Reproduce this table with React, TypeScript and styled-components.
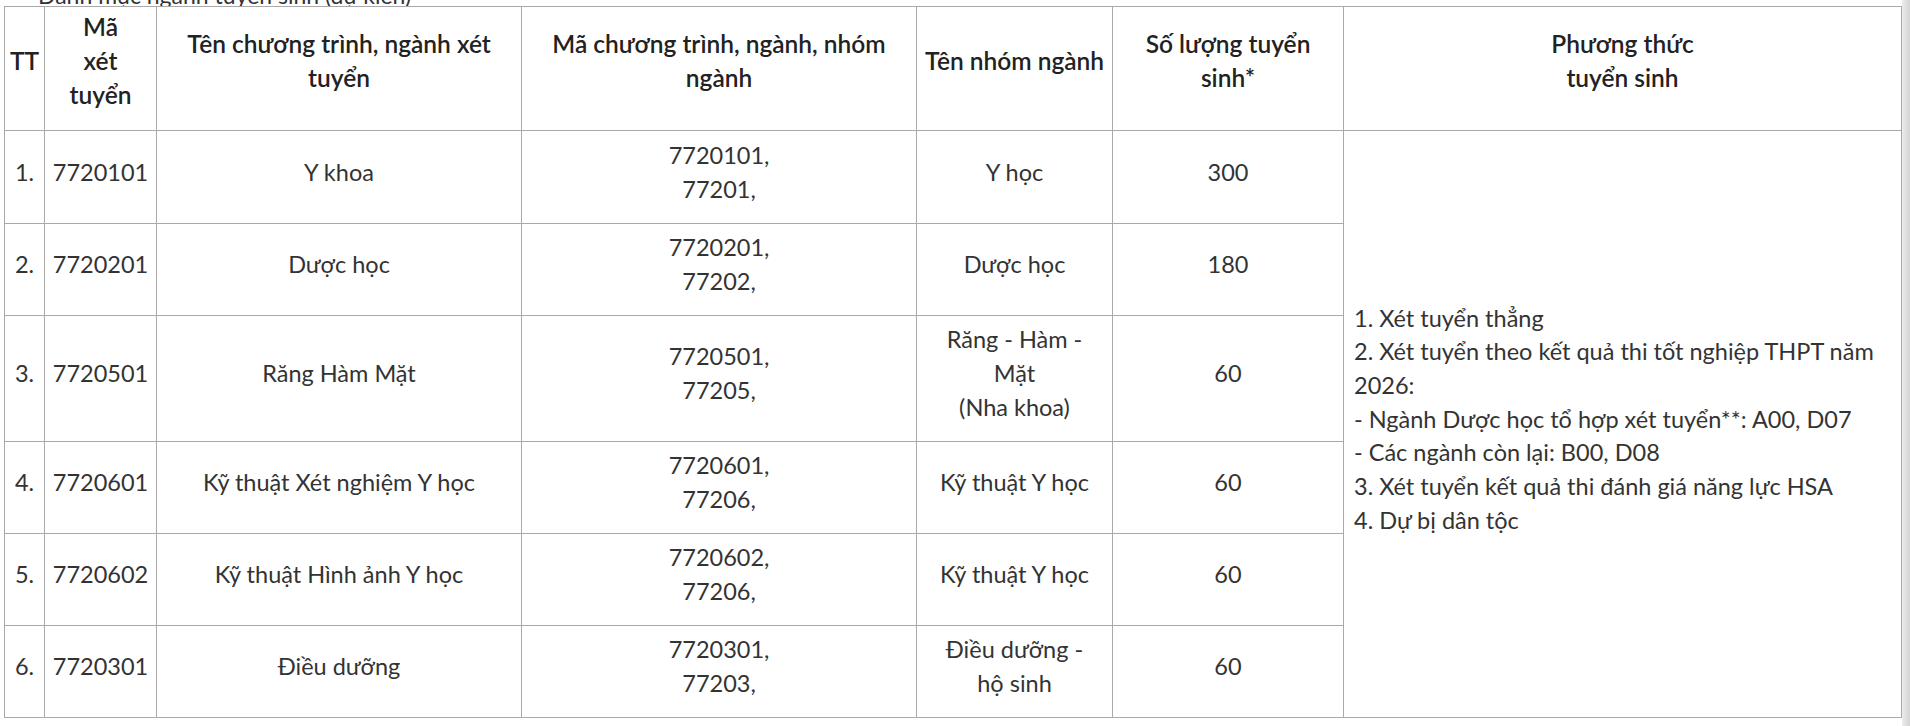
import React from 'react';
import styled, { createGlobalStyle } from 'styled-components';

interface Program {
  tt: string;
  code: string;
  name: string;
  groupCodes: string[];
  groupName: string[];
  quota: string;
}

const headers: string[][] = [
  ['TT'],
  ['Mã', 'xét', 'tuyển'],
  ['Tên chương trình, ngành xét', 'tuyển'],
  ['Mã chương trình, ngành, nhóm', 'ngành'],
  ['Tên nhóm ngành'],
  ['Số lượng tuyển', 'sinh*'],
  ['Phương thức', 'tuyển sinh'],
];

const programs: Program[] = [
  { tt: '1.', code: '7720101', name: 'Y khoa', groupCodes: ['7720101,', '77201,'], groupName: ['Y học'], quota: '300' },
  { tt: '2.', code: '7720201', name: 'Dược học', groupCodes: ['7720201,', '77202,'], groupName: ['Dược học'], quota: '180' },
  { tt: '3.', code: '7720501', name: 'Răng Hàm Mặt', groupCodes: ['7720501,', '77205,'], groupName: ['Răng - Hàm -', 'Mặt', '(Nha khoa)'], quota: '60' },
  { tt: '4.', code: '7720601', name: 'Kỹ thuật Xét nghiệm Y học', groupCodes: ['7720601,', '77206,'], groupName: ['Kỹ thuật Y học'], quota: '60' },
  { tt: '5.', code: '7720602', name: 'Kỹ thuật Hình ảnh Y học', groupCodes: ['7720602,', '77206,'], groupName: ['Kỹ thuật Y học'], quota: '60' },
  { tt: '6.', code: '7720301', name: 'Điều dưỡng', groupCodes: ['7720301,', '77203,'], groupName: ['Điều dưỡng -', 'hộ sinh'], quota: '60' },
];

const methods = [
  '1. Xét tuyển thẳng',
  '2. Xét tuyển theo kết quả thi tốt nghiệp THPT năm',
  '2026:',
  '- Ngành Dược học tổ hợp xét tuyển**: A00, D07',
  '- Các ngành còn lại: B00, D08',
  '3. Xét tuyển kết quả thi đánh giá năng lực HSA',
  '4. Dự bị dân tộc',
];

const colWidths = [40, 112, 365, 395, 196, 231];
const rowHeights = [93, 92, 126, 92, 92, 92];

const GlobalStyle = createGlobalStyle`
  html, body {
    margin: 0;
    padding: 0;
    background: #fff;
  }
  body {
    font-family: Lato, "Noto Sans", sans-serif;
    color: #333;
  }
`;

const Page = styled.div`
  display: flex;
  width: 1910px;
  height: 726px;
  overflow: hidden;
  background: #fff;
`;

const Content = styled.div`
  flex: 1;
  padding-left: 4px;
  display: flex;
  flex-direction: column;
`;

const ScrollEdge = styled.div`
  width: 8px;
  background: linear-gradient(to right, #ececec, #d4d4d4);
`;

const CutCaption = styled.div`
  height: 6px;
  overflow: hidden;
  display: flex;
  align-items: flex-end;
  padding-left: 34px;
  font-size: 23px;
  line-height: 23px;
  color: #333;
`;

const CaptionText = styled.span`
  display: block;
  margin-bottom: -1px;
`;

const Table = styled.table`
  width: 1898px;
  border-collapse: collapse;
  table-layout: fixed;
  border: 1px solid #a9a9a9;
`;

const HeadCell = styled.th`
  border: 1px solid #a9a9a9;
  padding: 1px 4px 17px;
  font-size: 24.5px;
  line-height: 34px;
  font-weight: 600;
  color: #222;
  text-align: center;
  vertical-align: middle;
  white-space: nowrap;
`;

const Cell = styled.td<{ $align?: 'left' | 'center' }>`
  border: 1px solid #a9a9a9;
  padding: 7px ${p => (p.$align === 'left' ? '10px' : '4px')} 16px;
  font-size: 23.5px;
  line-height: 33.7px;
  color: #333;
  text-align: ${p => p.$align || 'center'};
  vertical-align: middle;
  white-space: nowrap;
`;

const Row = styled.tr<{ $height: number }>`
  height: ${p => p.$height}px;
`;

const Line = styled.div``;

export default function App() {
  return (
    <>
      <GlobalStyle />
      <Page>
        <Content>
          <CutCaption>
            <CaptionText>Danh mục ngành tuyển sinh (dự kiến)</CaptionText>
          </CutCaption>
          <Table>
            <colgroup>
              {colWidths.map((w, i) => (
                <col key={i} style={{ width: w }} />
              ))}
              <col />
            </colgroup>
            <thead>
              <Row $height={124}>
                {headers.map((lines, i) => (
                  <HeadCell key={i}>
                    {lines.map(l => (
                      <Line key={l}>{l}</Line>
                    ))}
                  </HeadCell>
                ))}
              </Row>
            </thead>
            <tbody>
              {programs.map((p, i) => (
                <Row key={p.code} $height={rowHeights[i]}>
                  <Cell>{p.tt}</Cell>
                  <Cell>{p.code}</Cell>
                  <Cell>{p.name}</Cell>
                  <Cell>
                    {p.groupCodes.map(c => (
                      <Line key={c}>{c}</Line>
                    ))}
                  </Cell>
                  <Cell>
                    {p.groupName.map(n => (
                      <Line key={n}>{n}</Line>
                    ))}
                  </Cell>
                  <Cell>{p.quota}</Cell>
                  {i === 0 && (
                    <Cell $align="left" rowSpan={programs.length}>
                      {methods.map(m => (
                        <Line key={m}>{m}</Line>
                      ))}
                    </Cell>
                  )}
                </Row>
              ))}
            </tbody>
          </Table>
        </Content>
        <ScrollEdge />
      </Page>
    </>
  );
}
